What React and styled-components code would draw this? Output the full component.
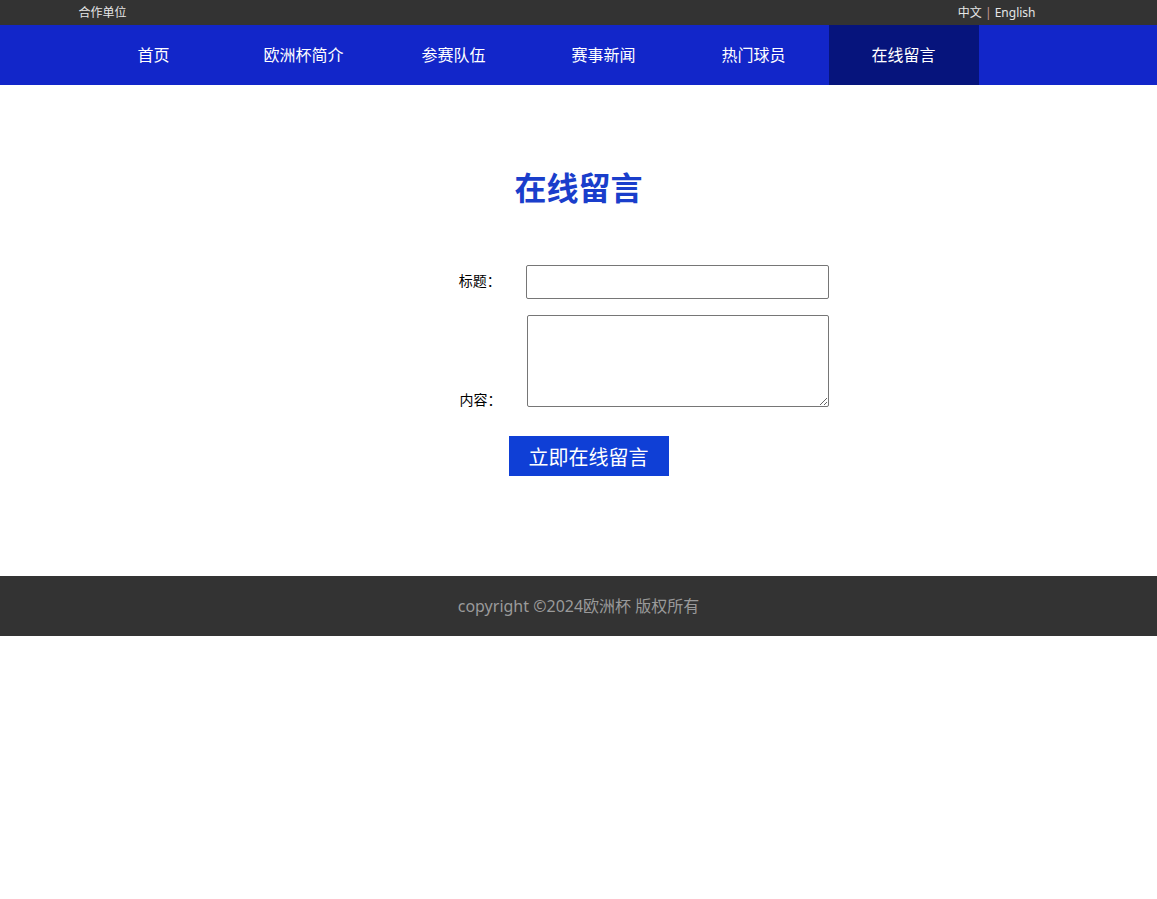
import React from "react";
import styled, { createGlobalStyle } from "styled-components";

const GlobalStyle = createGlobalStyle`
  * { box-sizing: border-box; }
  body {
    margin: 0;
    background: #fff;
    font-family: "Noto Sans", "Noto Sans CJK SC", sans-serif;
    color: #000;
  }
`;

const navItems = ["首页", "欧洲杯简介", "参赛队伍", "赛事新闻", "热门球员", "在线留言"];

export default function App() {
  return (
    <>
      <GlobalStyle />
      <TopBar>
        <Container>
          <span>合作单位</span>
          <span>
            中文 <Sep>|</Sep> English
          </span>
        </Container>
      </TopBar>
      <Nav>
        <NavInner>
          {navItems.map((item) => (
            <NavItem key={item} $active={item === "在线留言"}>
              {item}
            </NavItem>
          ))}
        </NavInner>
      </Nav>
      <Main>
        <Title>在线留言</Title>
        <Form onSubmit={(e) => e.preventDefault()}>
          <Row $first>
            <Label $first>标题：</Label>
            <Input type="text" />
          </Row>
          <Row>
            <Label>内容：</Label>
            <TextArea />
          </Row>
          <SubmitButton type="submit">立即在线留言</SubmitButton>
        </Form>
      </Main>
      <Footer>copyright ©2024欧洲杯 版权所有</Footer>
    </>
  );
}

const TopBar = styled.div`
  height: 25px;
  background: #333;
  color: #e6e6e6;
  font-size: 12px;
  line-height: 25px;
`;

const Container = styled.div`
  width: 1000px;
  margin: 0 auto;
  display: flex;
  justify-content: space-between;
  padding-right: 43px;
`;

const Sep = styled.span`
  color: #c99;
`;

const Nav = styled.nav`
  height: 60px;
  background: #1226c9;
`;

const NavInner = styled.ul`
  width: 1000px;
  margin: 0 auto;
  padding: 0;
  list-style: none;
  display: flex;
`;

const NavItem = styled.li`
  width: 150px;
  height: 60px;
  line-height: 60px;
  text-align: center;
  color: #fff;
  font-size: 16px;
  background: ${(p) => (p.$active ? "#06147c" : "transparent")};
`;

const Main = styled.main`
  padding: 75px 0 100px;
`;

const Title = styled.h2`
  margin: 0;
  text-align: center;
  font-size: 32px;
  line-height: 56px;
  font-weight: 700;
  color: #1a3ecb;
`;

const Form = styled.form`
  width: 500px;
  margin: 49px auto 0;
  display: flex;
  flex-direction: column;
`;

const Row = styled.div`
  display: flex;
  align-items: ${(p) => (p.$first ? "center" : "flex-end")};
  margin-bottom: ${(p) => (p.$first ? "16px" : "29px")};
`;

const Label = styled.label`
  width: 173px;
  margin-right: 25px;
  text-align: right;
  font-size: 14px;
  line-height: 14px;
  padding-bottom: ${(p) => (p.$first ? "3px" : "0")};
`;

const Input = styled.input`
  width: 304px;
  height: 34px;
  border: 1px solid #767676;
  border-radius: 2px;
  padding: 0 4px;
  font-size: 14px;
`;

const TextArea = styled.textarea`
  width: 302px;
  height: 92px;
  border: 1px solid #767676;
  border-radius: 2px;
  font-size: 14px;
  margin: 0;
`;

const SubmitButton = styled.button`
  width: 160px;
  height: 40px;
  margin-left: 180px;
  border: none;
  background: #0f3fd6;
  color: #fff;
  font-size: 20px;
  font-family: "Noto Sans CJK SC", "Noto Sans", sans-serif;
  cursor: pointer;
`;

const Footer = styled.footer`
  height: 60px;
  line-height: 60px;
  background: #333;
  color: #9a9a9a;
  text-align: center;
  font-size: 16px;
`;
